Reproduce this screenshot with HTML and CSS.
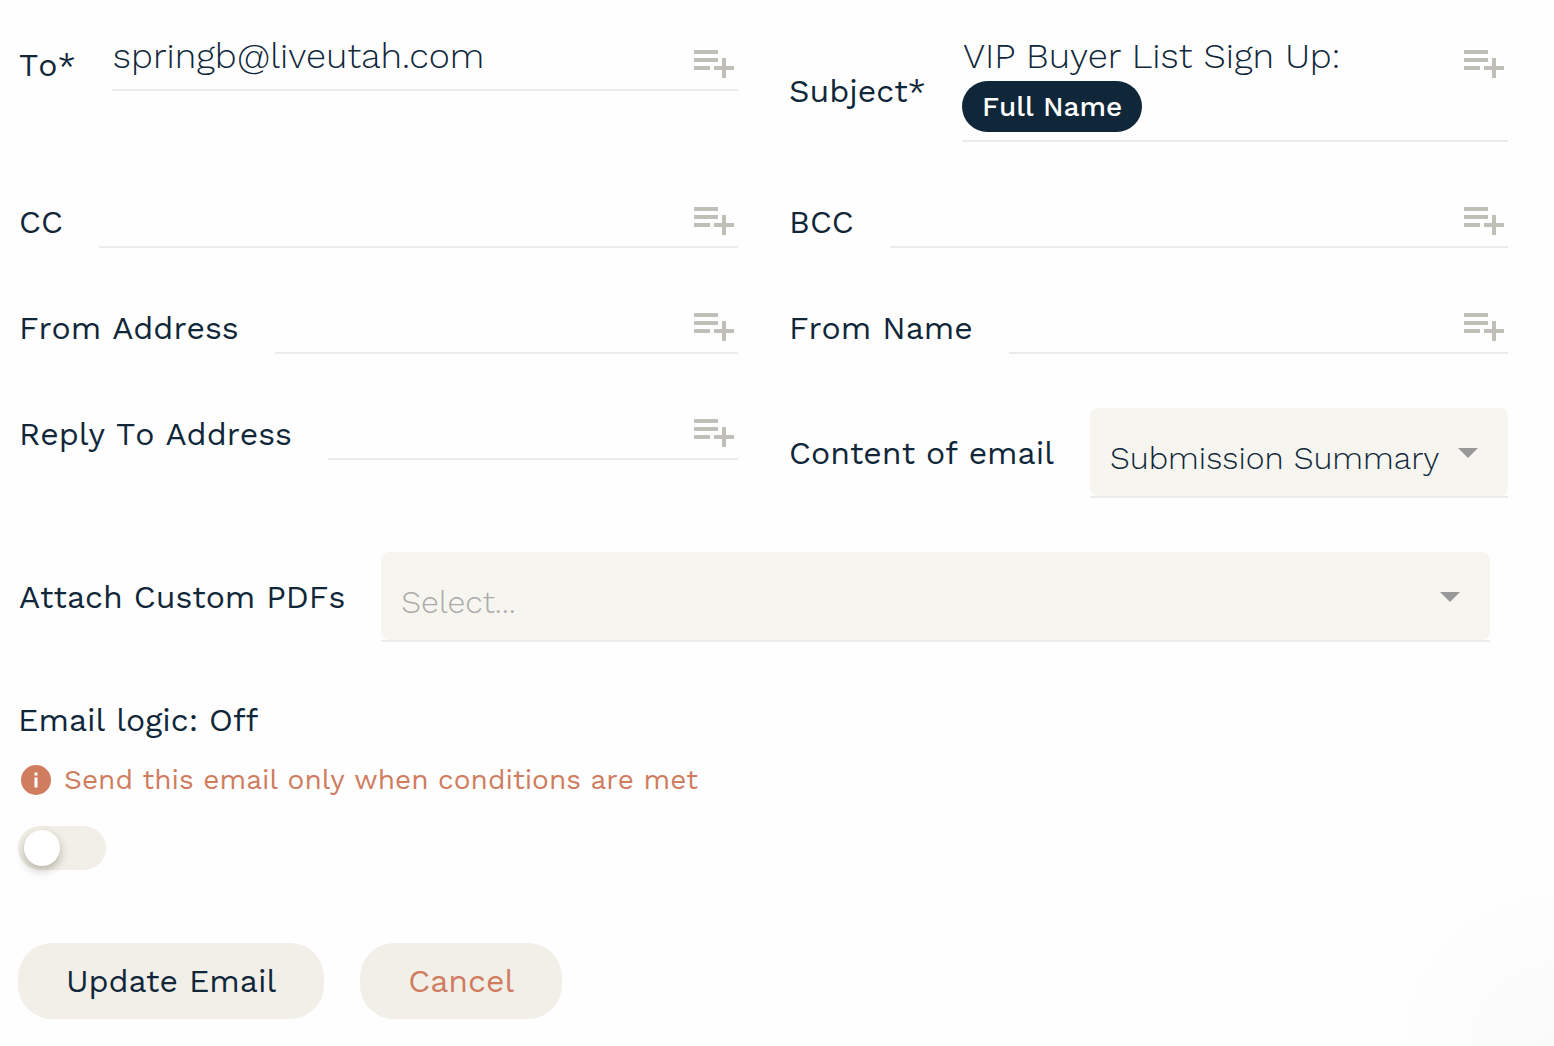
FILE: index.html
```html
<!DOCTYPE html>
<html lang="en">

<head>
    <meta charset="UTF-8" />
    <meta name="viewport" content="width=device-width, initial-scale=1.0" />
    <title>Email Settings</title>
    <link rel="stylesheet" href="styles.css">
</head>

<body>
    <!-- shared icon -->
    <svg class="icon-defs" aria-hidden="true">
        <symbol id="add-field" viewBox="0 0 40 28">
            <path d="M0 0h24v4H0zM0 8h24v4H0zM0 16h16v4H0zM28 8h4v8h8v4h-8v8h-4v-8h-8v-4h8z" />
        </symbol>
    </svg>

    <form class="email-form">
        <div class="fields">
            <div class="field">
                <label for="to">To*</label>
                <div class="text-box">
                    <input type="text" id="to" value="springb@liveutah.com" />
                    <button type="button" class="add-btn" aria-label="Add field to To"><svg><use href="#add-field" /></svg></button>
                </div>
            </div>
            <div class="field">
                <label for="subject">Subject*</label>
                <div class="text-box">
                    <div class="subject-value">
                        <input type="text" id="subject" value="VIP Buyer List Sign Up:" />
                        <span class="tag">Full Name</span>
                    </div>
                    <button type="button" class="add-btn" aria-label="Add field to Subject"><svg><use href="#add-field" /></svg></button>
                </div>
            </div>
            <div class="field">
                <label for="cc">CC</label>
                <div class="text-box">
                    <input type="text" id="cc" />
                    <button type="button" class="add-btn" aria-label="Add field to CC"><svg><use href="#add-field" /></svg></button>
                </div>
            </div>
            <div class="field">
                <label for="bcc">BCC</label>
                <div class="text-box">
                    <input type="text" id="bcc" />
                    <button type="button" class="add-btn" aria-label="Add field to BCC"><svg><use href="#add-field" /></svg></button>
                </div>
            </div>
            <div class="field">
                <label for="fromAddress">From Address</label>
                <div class="text-box">
                    <input type="text" id="fromAddress" />
                    <button type="button" class="add-btn" aria-label="Add field to From Address"><svg><use href="#add-field" /></svg></button>
                </div>
            </div>
            <div class="field">
                <label for="fromName">From Name</label>
                <div class="text-box">
                    <input type="text" id="fromName" />
                    <button type="button" class="add-btn" aria-label="Add field to From Name"><svg><use href="#add-field" /></svg></button>
                </div>
            </div>
            <div class="field">
                <label for="replyTo">Reply To Address</label>
                <div class="text-box">
                    <input type="text" id="replyTo" />
                    <button type="button" class="add-btn" aria-label="Add field to Reply To Address"><svg><use href="#add-field" /></svg></button>
                </div>
            </div>
            <div class="field">
                <label for="content">Content of email</label>
                <div class="select-box">
                    <select id="content">
                        <option>Submission Summary</option>
                    </select>
                    <span class="arrow"></span>
                </div>
            </div>
            <div class="field field-wide">
                <label for="pdfs">Attach Custom PDFs</label>
                <div class="select-box">
                    <select id="pdfs" class="placeholder">
                        <option value="">Select...</option>
                    </select>
                    <span class="arrow"></span>
                </div>
            </div>
        </div>

        <div class="logic">
            <label for="logic">Email logic: Off</label>
            <p class="hint">
                <svg class="info-icon" viewBox="0 0 30 30" aria-hidden="true">
                    <circle cx="15" cy="15" r="15" />
                    <path d="M13.500 7.500h3v3h-3zM13.500 12.500h3v10h-3z" fill="#fff" />
                </svg>
                Send this email only when conditions are met
            </p>
            <input type="checkbox" id="logic" class="toggle" />
        </div>

        <div class="actions">
            <button type="submit" class="btn">Update Email</button>
            <button type="button" class="btn btn-cancel">Cancel</button>
        </div>
    </form>
</body>

</html>
```
FILE: styles.css
```css
* {
    box-sizing: border-box;
}

body {
    margin: 0;
    min-height: 100vh;
    font-family: "Work Sans", Inter, sans-serif;
    font-size: 32px;
    font-kerning: none;
    font-variant-ligatures: common-ligatures;
    color: #10273a;
    background: radial-gradient(circle at bottom right, #fafafa, #fefefe 180px);
}

input,
select,
button {
    font-family: inherit;
    color: inherit;
    border: none;
    background: none;
    margin: 0;
    padding: 0;
}

.icon-defs {
    display: none;
}

.email-form {
    padding: 39px 46px 27px 18px;
}

.fields {
    display: grid;
    grid-template-columns: 1fr 1fr;
    gap: 54px 50px;
    align-items: start;
}

.field {
    display: flex;
    align-items: center;
    gap: 36px;
    padding-left: 1px;
}

.field-wide {
    grid-column: 1 / -1;
    margin-right: 18px;
}

label {
    line-height: 40px;
    white-space: nowrap;
}

.text-box {
    flex: 1;
    min-width: 0;
    display: flex;
    align-items: flex-start;
    border-bottom: 2px solid #ebebeb;
}

.text-box input {
    flex: 1;
    min-width: 0;
    width: 100%;
    height: 44px;
    margin: -5px 0 11px;
    padding-left: 1px;
    font-size: 36px;
    font-weight: 300;
}

.subject-value {
    flex: 1;
    min-width: 0;
    padding-bottom: 8px;
}

.subject-value input {
    display: block;
    margin-bottom: 3px;
}

.tag {
    display: inline-block;
    padding: 0 20px;
    border-radius: 26px;
    background-color: #10273a;
    color: #fff;
    font-size: 28px;
    font-weight: 500;
    line-height: 51px;
    vertical-align: top;
}

.add-btn {
    margin: 11px 4px 0 12px;
    cursor: pointer;
}

.add-btn svg {
    display: block;
    width: 40px;
    height: 28px;
    fill: #bfbfb7;
}

.select-box {
    flex: 1;
    min-width: 0;
    display: grid;
    align-items: center;
    border-bottom: 2px solid #ebebeb;
}

.select-box select,
.arrow {
    grid-area: 1 / 1;
}

.select-box select {
    appearance: none;
    width: 100%;
    height: 88px;
    padding: 12px 60px 0 20px;
    border-radius: 8px;
    background-color: #f6f5ef;
    font-size: 32px;
    font-weight: 300;
}

.select-box .placeholder {
    color: #aaa;
}

.arrow {
    justify-self: end;
    width: 20px;
    height: 10px;
    margin: 2px 30px 0 0;
    background-color: #999;
    clip-path: polygon(0 0, 100% 0, 50% 100%);
    pointer-events: none;
}

.logic {
    margin-top: 58px;
}

.hint {
    display: flex;
    align-items: center;
    gap: 13px;
    margin: 20px 0 26px;
    padding-left: 3px;
    color: #cf7c5f;
    font-size: 28px;
    line-height: 40px;
}

.info-icon {
    width: 30px;
    height: 30px;
    fill: #cf7c5f;
}

.toggle {
    appearance: none;
    display: flex;
    align-items: center;
    width: 88px;
    height: 44px;
    padding: 0 6px;
    border-radius: 22px;
    background-color: #f2efe8;
    cursor: pointer;
}

.toggle::before {
    content: "";
    width: 36px;
    height: 36px;
    border-radius: 50%;
    background-color: #fff;
    box-shadow: 0 4px 10px rgba(60, 60, 40, 0.35);
}

.toggle:checked {
    justify-content: flex-end;
    background-color: #10273a;
}

.actions {
    display: flex;
    gap: 36px;
    margin-top: 73px;
}

.btn {
    height: 76px;
    padding: 0 48px;
    border-radius: 34px;
    background-color: #f2efe8;
    font-size: 32px;
    cursor: pointer;
}

.btn-cancel {
    color: #cf7c5f;
}
```
